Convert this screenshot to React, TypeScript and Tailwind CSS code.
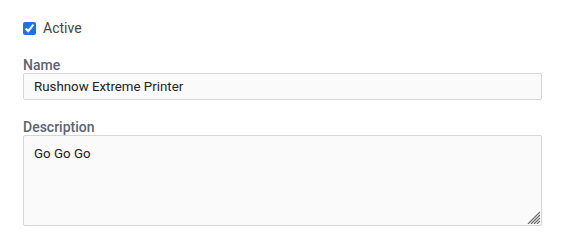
import { useState } from "react"

export default function App() {
  const [active, setActive] = useState(true)
  const [name, setName] = useState("Rushnow Extreme Printer")
  const [description, setDescription] = useState("Go Go Go")

  return (
    <div className="w-[565px] h-[240px] bg-white px-[23px] pt-[20px] font-['Roboto',sans-serif]">
      {/* Active toggle */}
      <label className="flex items-center gap-[7px] h-[17px] text-[14px] text-[#444]">
        <input
          type="checkbox"
          checked={active}
          onChange={(e) => setActive(e.target.checked)}
          className="m-0 w-[13px] h-[13px] accent-[#1a73e8]"
        />
        Active
      </label>

      <div className="mt-[20px]">
        <label className="block h-[16px] leading-[16px] text-[14px] font-medium text-[#5a6473]">Name</label>
        <input
          value={name}
          onChange={(e) => setName(e.target.value)}
          className="block w-full h-[27px] px-[10px] text-[13.3px] text-[#222] bg-[#fafafa] border border-[#d6d6d6] rounded-[2px] outline-none"
        />
      </div>

      <div className="mt-[19px]">
        <label className="block h-[16px] leading-[16px] text-[14px] font-medium text-[#5a6473]">Description</label>
        <div className="relative">
          <textarea
            value={description}
            onChange={(e) => setDescription(e.target.value)}
            className="block w-full h-[91px] px-[10px] py-[9px] text-[13.3px] leading-[18px] text-[#222] bg-[#fafafa] border border-[#d6d6d6] rounded-[2px] outline-none resize-none"
          />
          {/* resize grip */}
          <svg className="absolute right-[2px] bottom-[2px] pointer-events-none" width="13" height="13" viewBox="0 0 13 13">
            <g stroke="#6b6b6b" strokeWidth="1.2">
              <line x1="13" y1="1" x2="1" y2="13" />
              <line x1="13" y1="4" x2="4" y2="13" />
              <line x1="13" y1="7" x2="7" y2="13" />
              <line x1="13" y1="10" x2="10" y2="13" />
            </g>
          </svg>
        </div>
      </div>
    </div>
  )
}
